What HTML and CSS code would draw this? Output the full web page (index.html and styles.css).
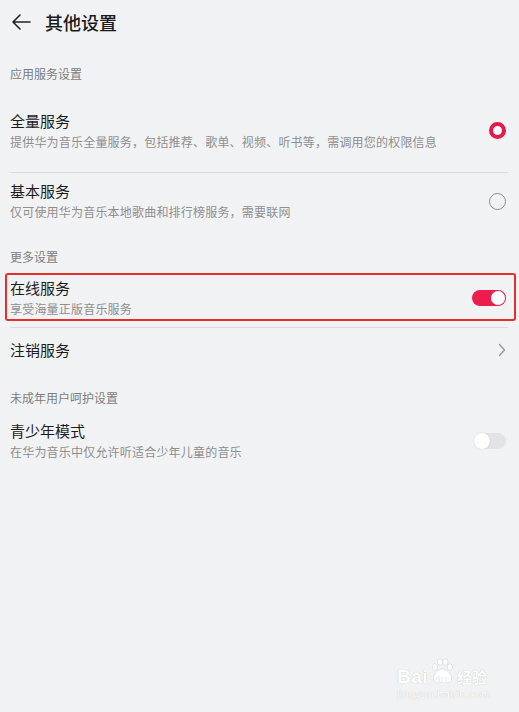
FILE: index.html
```html
<!DOCTYPE html>
<html lang="zh-CN">
<head>
    <meta charset="UTF-8">
    <meta name="viewport" content="width=device-width, initial-scale=1.0">
    <title>其他设置</title>
    <link rel="stylesheet" href="styles.css">
</head>
<body>
    <div class="page">
        <!-- Top bar -->
        <div class="topbar">
            <svg class="back" width="20" height="16" viewBox="0 0 20 16">
                <path d="M2 8 H19 M9 1 L2 8 L9 15" fill="none" stroke="#222" stroke-width="1.6" stroke-linecap="round" stroke-linejoin="round"/>
            </svg>
            <span class="title">其他设置</span>
        </div>

        <div class="content">
            <div class="group-label first">应用服务设置</div>

            <div class="item item-full">
                <div class="text">
                    <div class="item-title">全量服务</div>
                    <div class="item-sub">提供华为音乐全量服务，包括推荐、歌单、视频、听书等，需调用您的权限信息</div>
                </div>
                <div class="radio checked"></div>
            </div>

            <div class="item item-basic">
                <div class="text">
                    <div class="item-title">基本服务</div>
                    <div class="item-sub">仅可使用华为音乐本地歌曲和排行榜服务，需要联网</div>
                </div>
                <div class="radio"></div>
            </div>

            <div class="group-label">更多设置</div>

            <div class="item item-online">
                <div class="text">
                    <div class="item-title">在线服务</div>
                    <div class="item-sub">享受海量正版音乐服务</div>
                </div>
                <div class="switch on"><span class="knob"></span></div>
            </div>
            <div class="divider"></div>

            <div class="item item-single">
                <div class="item-title">注销服务</div>
                <svg class="chevron" width="8" height="14" viewBox="0 0 8 14">
                    <path d="M1.5 1.5 L6.5 7 L1.5 12.5" fill="none" stroke="#999" stroke-width="1.4" stroke-linecap="round" stroke-linejoin="round"/>
                </svg>
            </div>

            <div class="group-label minor">未成年用户呵护设置</div>

            <div class="item item-teen">
                <div class="text">
                    <div class="item-title">青少年模式</div>
                    <div class="item-sub">在华为音乐中仅允许听适合少年儿童的音乐</div>
                </div>
                <div class="switch off"><span class="knob"></span></div>
            </div>
        </div>

        <!-- watermark -->
        <div class="watermark">
            <div class="wm-logo">
                <span class="wm-bai">Bai</span>
                <span class="wm-paw">
                    <svg width="24" height="26" viewBox="0 0 24 26">
                        <g fill="#fff" stroke="rgba(0,0,0,0.12)" stroke-width="0.8">
                            <ellipse cx="5" cy="9" rx="2.6" ry="3.2"/>
                            <ellipse cx="10" cy="4" rx="2.6" ry="3.2"/>
                            <ellipse cx="15.5" cy="4" rx="2.6" ry="3.2"/>
                            <ellipse cx="20" cy="9" rx="2.6" ry="3.2"/>
                            <path d="M12.5 11 C7 11 2.5 18 3.5 22.5 C4.5 26 9 24.5 12.5 24.5 C16 24.5 20.5 26 21.5 22.5 C22.5 18 18 11 12.5 11 Z"/>
                        </g>
                    </svg>
                    <span class="wm-du">du</span>
                </span>
                <span class="wm-jy">经验</span>
            </div>
            <div class="wm-url">jingyan.baidu.com</div>
        </div>
    </div>
</body>
</html>
```

FILE: styles.css
```css
* {
    margin: 0;
    padding: 0;
    box-sizing: border-box;
}

body {
    font-family: "Noto Sans CJK SC", "Noto Sans", sans-serif;
    background: #f1f2f4;
    color: #1c1c1c;
}

.page {
    position: relative;
    width: 519px;
    height: 712px;
    overflow: hidden;
}

/* Top bar */
.topbar {
    height: 44px;
    display: flex;
    align-items: center;
    padding-left: 11px;
}

.back {
    display: block;
}

.title {
    margin-left: 14px;
    font-size: 18px;
    line-height: 24px;
    font-weight: 500;
    color: #1a1a1a;
}

.content {
    padding: 0 11px 0 10px;
}

/* Group labels */
.group-label {
    font-size: 12px;
    line-height: 16px;
    color: #7d7d7d;
    padding-top: 20px;
}

.group-label.first {
    padding-top: 22px;
}

.group-label.minor {
    padding-top: 18px;
}

/* Items */
.item {
    display: flex;
    align-items: center;
    justify-content: space-between;
}

.text {
    flex: 1;
}

.item-title {
    font-size: 15px;
    line-height: 20px;
    color: #1c1c1c;
}

.item-sub {
    margin-top: 1px;
    font-size: 12px;
    line-height: 19px;
    color: #8e8e8e;
    letter-spacing: 0.2px;
}

.item-full {
    padding: 29px 0 21px;
    border-bottom: 1px solid #dadbdd;
}

.item-basic {
    padding: 8px 0;
}

.item-online {
    margin: 8px -8px 0 -5px;
    padding: 3px 7px 1px 3px;
    border: 2px solid #e62f2c;
    border-radius: 3px;
}

.divider {
    margin-top: 6px;
    height: 1px;
    background: #dadbdd;
}

.item-single {
    height: 44px;
}

.item-teen {
    padding-top: 15px;
}

/* Controls */
.radio {
    width: 17px;
    height: 17px;
    border-radius: 50%;
    border: 1px solid #8e8e8e;
    margin-right: 2px;
}

.radio.checked {
    border: 4.5px solid #e8194a;
    background: #fff;
    margin-bottom: 2px;
}

.switch {
    position: relative;
    border-radius: 9px;
    margin-right: 1px;
}

.switch.on {
    width: 34px;
    height: 16px;
    background: #ec1d4c;
}

.switch.on .knob {
    position: absolute;
    right: 1px;
    top: 1px;
    width: 14px;
    height: 14px;
    border-radius: 50%;
    background: #fff;
}

.switch.off {
    width: 32px;
    height: 16px;
    background: #e3e3e5;
    margin-right: 2px;
}

.switch.off .knob {
    position: absolute;
    left: 0;
    top: 0;
    width: 16px;
    height: 16px;
    border-radius: 50%;
    background: #fff;
    box-shadow: 0 0 2px rgba(0,0,0,0.12);
}

.chevron {
    display: block;
    margin-right: 2px;
}

/* Watermark overlay */
.watermark {
    position: absolute;
    left: 397px;
    top: 656px;
    width: 100px;
    color: #fff;
    text-shadow: 0 0 1px rgba(0,0,0,0.25);
}

.wm-logo {
    display: flex;
    align-items: flex-end;
    height: 30px;
}

.wm-bai {
    font-family: "Liberation Sans", sans-serif;
    font-weight: bold;
    font-size: 19px;
    line-height: 18px;
    letter-spacing: 0.5px;
}

.wm-paw {
    position: relative;
    width: 26px;
    height: 28px;
    margin-left: 1px;
}

.wm-paw svg {
    position: absolute;
    left: 1px;
    top: 0;
}

.wm-du {
    position: absolute;
    left: 5px;
    bottom: 1px;
    font-family: "Liberation Sans", sans-serif;
    font-size: 11px;
    font-weight: bold;
    line-height: 12px;
    color: #f1f2f4;
    text-shadow: none;
}

.wm-jy {
    margin-left: 2px;
    font-size: 15px;
    line-height: 18px;
    font-weight: bold;
}

.wm-url {
    margin-top: 2px;
    font-family: "Liberation Sans", sans-serif;
    font-size: 11px;
    line-height: 12px;
    letter-spacing: 0.3px;
}
```
